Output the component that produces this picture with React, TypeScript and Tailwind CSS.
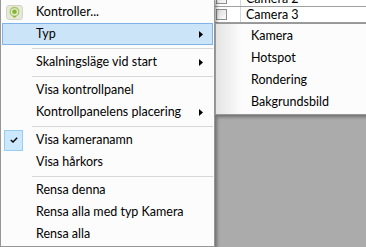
import React from "react";

type Item =
  | { kind: "item"; label: string; arrow?: boolean; active?: boolean; checked?: boolean; icon?: boolean }
  | { kind: "sep" };

const mainItems: Item[] = [
  { kind: "item", label: "Kontroller...", icon: true },
  { kind: "item", label: "Typ", arrow: true, active: true },
  { kind: "sep" },
  { kind: "item", label: "Skalningsläge vid start", arrow: true },
  { kind: "sep" },
  { kind: "item", label: "Visa kontrollpanel" },
  { kind: "item", label: "Kontrollpanelens placering", arrow: true },
  { kind: "sep" },
  { kind: "item", label: "Visa kameranamn", checked: true },
  { kind: "item", label: "Visa hårkors" },
  { kind: "sep" },
  { kind: "item", label: "Rensa denna" },
  { kind: "item", label: "Rensa alla med typ Kamera" },
  { kind: "item", label: "Rensa alla" },
];

const subItems = ["Kamera", "Hotspot", "Rondering", "Bakgrundsbild"];

function ControlIcon() {
  return (
    <svg width="17" height="15" viewBox="0 0 17 15">
      <rect x="0.5" y="0.5" width="16" height="14" rx="2.5" fill="#e6e9da" stroke="#d2d5c4" />
      <circle cx="8.5" cy="6.8" r="4.3" fill="none" stroke="#a6c95a" strokeWidth="1.3" />
      <circle cx="8.5" cy="6.8" r="2.3" fill="#86b536" />
      <path d="M6.5 11 H10.5 L9.5 12.5 H7.5 Z" fill="#8bb83a" />
    </svg>
  );
}

function Arrow() {
  return (
    <svg width="4" height="7" viewBox="0 0 4 7" className="absolute right-[9px] top-[7px]">
      <path d="M0 0 L4 3.5 L0 7 Z" fill="#000" />
    </svg>
  );
}

function Checkbox() {
  return (
    <div className="w-[11px] h-[11px] border border-[#8e8f8f] bg-gradient-to-br from-[#dcdcdc] to-[#fbfbfb]" />
  );
}

export default function App() {
  return (
    <div
      className="relative w-[366px] h-[247px] overflow-hidden bg-white text-[12.5px] text-black"
      style={{ fontFamily: '"Segoe UI", Lato, "Noto Sans", sans-serif' }}
    >
      {/* background application */}
      <div className="flex flex-col h-full">
        <div className="flex flex-col -mt-[9px] bg-white">
          {["Camera 2", "Camera 3"].map((name) => (
            <div key={name} className="flex h-[16px] border-b border-[#a0a0a0]">
              <div className="w-[212px]" />
              <div className="w-[29px] border-r border-[#d6d6d6] flex items-center pl-[4px]">
                <Checkbox />
              </div>
              <div className="pl-[5px] leading-[15px]">{name}</div>
            </div>
          ))}
        </div>
        <div className="flex-1 bg-[#ababab]" />
      </div>

      {/* main context menu */}
      <div className="absolute left-0 top-[-2px] w-[215px] bg-[#fcfcfc] border border-[#979797] pt-[2px] pb-[1px] px-[1px] shadow-[2px_2px_3px_rgba(0,0,0,0.35)]">
        {mainItems.map((it, i) =>
          it.kind === "sep" ? (
            <div key={i} className="h-[6px] flex items-center pl-[30px]">
              <div className="h-px w-full bg-[#d7d7d7]" />
            </div>
          ) : (
            <div
              key={i}
              className={`relative h-[22px] flex items-center ${
                it.active ? "bg-[#cce4f7] border border-[#7eb4ea]" : "border border-transparent"
              }`}
            >
              <div className="w-[32px] h-full flex items-center justify-start pl-[1px]">
                {it.icon && (
                  <div className="pl-[2px] pt-[1px]">
                    <ControlIcon />
                  </div>
                )}
                {it.checked && (
                  <div className="w-[19px] h-[21px] bg-[#cce8ff] border border-[#99ccf3] flex items-center justify-center">
                    <svg width="8" height="6" viewBox="0 0 8 6">
                      <path d="M0.8 3 L3 5 L7.2 0.8" fill="none" stroke="#000" strokeWidth="1.4" />
                    </svg>
                  </div>
                )}
              </div>
              <span className="pl-[1px] whitespace-nowrap">{it.label}</span>
              {it.arrow && <Arrow />}
            </div>
          )
        )}
      </div>

      {/* submenu */}
      <div className="absolute left-[215px] top-[23px] w-[152px] border border-[#979797] bg-[#fcfcfc] py-[1px] shadow-[2px_2px_3px_rgba(0,0,0,0.35)]">
        <div className="absolute left-0 top-0 bottom-0 w-[26px] bg-gradient-to-r from-[#e4e4e4] to-[#fcfcfc]" />
        {subItems.map((s) => (
          <div key={s} className="relative h-[22px] flex items-center pl-[35px] whitespace-nowrap">
            {s}
          </div>
        ))}
      </div>
    </div>
  );
}
